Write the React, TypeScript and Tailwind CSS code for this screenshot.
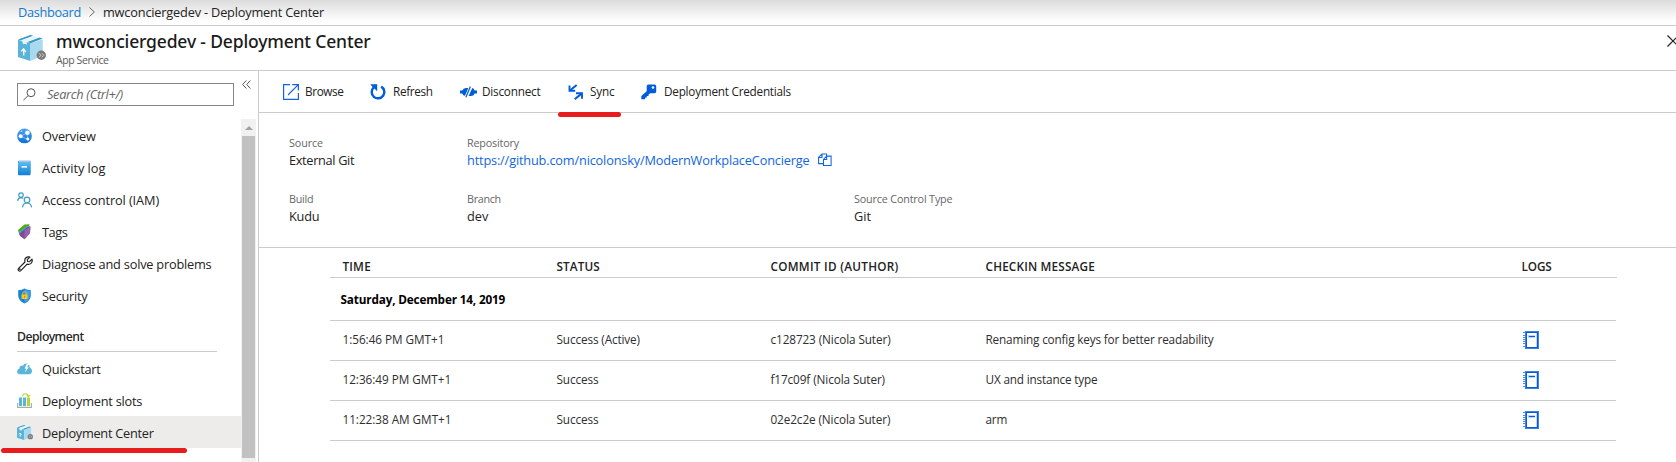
import type { ReactNode } from "react";

/* ---------- icons ---------- */

function PackageIcon({ className }: { className: string }) {
  return (
    <svg viewBox="0 0 28 26" className={className}>
      <path d="M0 4.800 12.500 8.200V26L0 22Z" fill="#59b4d9" />
      <path d="M12.500 8.200 24.700 4.200V20.500L12.500 26Z" fill="#a9d9ee" />
      <path d="M0 4.400 12.300 0 15.200.7 3 5.200Z" fill="#3999c6" />
      <path d="M9.300 7 21.500 2.500 24.700 3.500 12.500 8.200Z" fill="#3999c6" />
      <path d="M3.400 5.600 15.700 1.100 20.800 2.300 8.800 6.900V10L7.300 8.800 5.200 9.300 4.400 7Z" fill="#e6f4fa" />
      <path d="M5.700 20.500v-5.700M3.300 16.200 5.600 13.900 7.900 17.200" stroke="#fff" strokeWidth="1.400" fill="none" />
      <circle cx="23.300" cy="20.300" r="4.700" fill="#7a7a7a" />
      <path d="M20.900 18.200 23 20.300l-2.100 2.100M23.800 18.200l2.100 2.100-2.100 2.100" stroke="#ddd" strokeWidth=".9" fill="none" />
    </svg>
  );
}

function GlobeIcon() {
  return (
    <svg viewBox="0 0 16 16" className="size-4">
      <defs>
        <linearGradient id="globe" x1="0" y1="0" x2="0" y2="1">
          <stop offset="0" stopColor="#4ba3f2" />
          <stop offset="1" stopColor="#1170d0" />
        </linearGradient>
      </defs>
      <circle cx="7.500" cy="7.900" r="7.400" fill="url(#globe)" />
      <path d="M3.500 8.500 10 4.600 13 3M10 4.600l.6 6.200M3.500 8.500l7 2.600" stroke="#8cc7f7" strokeWidth=".8" fill="none" />
      <circle cx="3.600" cy="8.200" r="2" fill="#fff" />
      <circle cx="10.400" cy="4.700" r="2.300" fill="#fff" />
      <circle cx="10.800" cy="11" r="1.500" fill="#fff" />
      <circle cx="4.500" cy="3.300" r=".8" fill="#c9e5fb" />
    </svg>
  );
}

function BookIcon() {
  return (
    <svg viewBox="0 0 16 16" className="size-4">
      <defs>
        <linearGradient id="book" x1="0" y1="0" x2="0" y2="1">
          <stop offset="0" stopColor="#5bbcf0" />
          <stop offset="1" stopColor="#0f7fd6" />
        </linearGradient>
      </defs>
      <path d="M1 2Q1 .7 2.300.7H13.500V13H1Z" fill="#2d86c9" />
      <rect x="1" y="2.200" width="12.500" height="13" rx=".8" fill="url(#book)" />
      <path d="M2 1.700h11" stroke="#d4ecfa" strokeWidth=".8" />
      <rect x="4.500" y="6" width="5.500" height="1.600" fill="#fff" />
    </svg>
  );
}

function PeopleIcon() {
  return (
    <svg viewBox="0 0 16 16" className="size-4" fill="none" stroke="#3e9cc7" strokeWidth="1.200">
      <circle cx="4" cy="3.100" r="2.300" />
      <path d="M.6 8.800Q1 5.700 4 5.600q1.400 0 2.300.8" />
      <circle cx="10" cy="8" r="2.800" />
      <path d="M5.500 15.400Q6 11 10 11t4.600 4.400" />
    </svg>
  );
}

function TagIcon() {
  return (
    <svg viewBox="0 0 16 16" className="size-4">
      <path d="M1 6 7.500.500 12.500.300 11.500 3.500 2 9.600Z" fill="#59a800" />
      <path d="M1.800 8 9.300 2.200 12.800 1.800V4.200L2.400 11Z" fill="#32a9cf" />
      <path d="M2.300 9.800 10.200 3.300 13.400 2.600 13 9 7.500 15.200 3 12Z" fill="#804998" />
      <path d="M7.500 15.200V6.500L13.400 2.600 13 9Z" fill="#9563ab" />
    </svg>
  );
}

function WrenchIcon() {
  return (
    <svg viewBox="0 0 16 16" className="size-4" fill="none" stroke="#1b1b1b" strokeWidth="1.150" strokeLinejoin="round">
      <path d="M12.900 1.100 10.300 3.600l.3 1.900 1.900.2 2.500-2.500q.8 3-1.200 4.400-1.500 1.100-3.700.5l-6.300 6.500q-1.100.9-2.200 0-1-1.100 0-2.300L8 6Q7.300 3.600 8.700 2q1.800-1.700 4.200-.9Z" />
      <circle cx="2.800" cy="13.200" r=".3" />
    </svg>
  );
}

function ShieldIcon() {
  return (
    <svg viewBox="0 0 16 16" className="size-4">
      <path d="M7.500.500Q10 2.200 13.800 2.200V7.500Q13.600 12.500 7.500 15.500 1.400 12.500 1.200 7.500V2.200Q5 2.200 7.500.500Z" fill="#1583dd" />
      <path d="M7.500 1.600Q10 3 12.800 3.100V7.500Q12.600 11.800 7.500 14.400Z" fill="#3fa4ee" />
      <path d="M5.700 7V5.500q0-1.800 1.800-1.800t1.800 1.800V7" stroke="#f5b800" strokeWidth="1.100" fill="none" />
      <rect x="4.500" y="6.500" width="6" height="4.500" rx=".5" fill="#ffc61a" />
      <rect x="7" y="7.800" width="1" height="2" fill="#c98a00" />
    </svg>
  );
}

function CloudIcon() {
  return (
    <svg viewBox="0 0 16 16" className="size-4">
      <path d="M3 13.200Q.2 13 .1 10.400 0 8.200 2.300 7.700 2.200 5.300 4.300 4.700 5.100 4.500 5.800 4.800 7 2.600 9.300 2.600q3.200.2 3.400 4Q15 7.300 15 9.900q-.1 3-2.700 3.300Z" fill="#59b4d9" />
      <path d="M9.800 2.500 7.500 7.600h1.700L7.900 11.500l3.900-5.200H10L12 3.200Z" fill="#fff" />
    </svg>
  );
}

function SlotsIcon() {
  return (
    <svg viewBox="0 0 16 16" className="size-4">
      <path d="M.6 10v4.400h13.800V10" stroke="#a9abac" strokeWidth="1.100" fill="none" />
      <rect x="2" y="4.500" width="3" height="8.500" fill="#59b4d9" />
      <rect x="6" y="4.500" width="3" height="8.500" fill="#59b4d9" />
      <rect x="10" y="4.500" width="3" height="8.500" fill="#b8d432" />
      <path d="M5.500 3.300Q5.800.700 8.300.700q2.700 0 3 2.800M9.600 2.200l1.700 1.600 1.700-1.600" stroke="#b8d432" strokeWidth="1.100" fill="none" />
    </svg>
  );
}

function BrowseIcon() {
  return (
    <svg viewBox="0 0 16 16" className="size-4" fill="none" stroke="#1266dd">
      <path d="M7 .6H.6v14.800h14.800V9" strokeWidth="1.200" />
      <path d="M5 11 14.800 1.200M9.300.600h6.100v5.800" strokeWidth="1.200" />
    </svg>
  );
}

function RefreshIcon() {
  return (
    <svg viewBox="0 0 16 16" className="size-4">
      <path d="M11.200 2.600a6.300 6.300 0 1 1-7.600.9" fill="none" stroke="#015cda" strokeWidth="2.400" />
      <path d="M.3.300H7.200V7.200L4.900 4.900 2.700 3.200Z" fill="#015cda" />
    </svg>
  );
}

function DisconnectIcon() {
  return (
    <svg viewBox="0 0 17 12" className="h-3 w-[17px]">
      <path d="M0 4.600H2.300Q3.300 2 5.800 2H8.400L5 9.800Q3 9.500 2.300 7.400H0Z" fill="#015cda" />
      <path d="M17 4.600H14.700Q13.900 2.300 12.300 2L8.600 10h2.100q3 0 4-2.600H17Z" fill="#015cda" />
      <path d="M10.500.400 5.900 11.600" stroke="#fff" strokeWidth="2.400" />
      <path d="M10.400.500 5.900 11.300" stroke="#015cda" strokeWidth="1.200" />
    </svg>
  );
}

function SyncIcon() {
  return (
    <svg viewBox="0 0 16 16" className="size-4" fill="none" stroke="#015cda">
      <path d="M8.700.900 2.500 6" strokeWidth="2" />
      <path d="M1.500 1.500V6.700h5.700" strokeWidth="1.900" />
      <path d="M6.700 15.200l6.500-5.300" strokeWidth="2" />
      <path d="M8 9.200h6v5.500" strokeWidth="1.900" />
    </svg>
  );
}

function KeyIcon() {
  return (
    <svg viewBox="0 0 16 16" className="size-4">
      <path d="M7.500.500h6q1.700 0 1.700 1.700v5.300q0 1.700-1.700 1.700H9.200L7.500 10.800v1.300H5.900l-.2 1.500-1.600.2-.2 1.500H.3v-3.200L5.700 7.300V2.300Q5.800.500 7.500.500Z" fill="#015cda" />
      <circle cx="12" cy="3.500" r="1.300" fill="#fff" />
    </svg>
  );
}

function CopyIcon() {
  return (
    <svg viewBox="0 0 14 14" className="h-3.5 w-3.5" fill="none" stroke="#1266dd" strokeWidth="1.050">
      <path d="M5.500 10.600H.6V4.200L4 .9H8.600V3M.6 4.500H4V.9" />
      <path d="M5.500 6.300 8.700 3.100h4.400v9.400H5.500ZM5.500 6.500H8.700V3.100" />
    </svg>
  );
}

function LogIcon() {
  return (
    <svg viewBox="0 0 16 18" className="h-[18px] w-4">
      <rect x="2.500" y=".5" width="13" height="17" fill="#fff" stroke="#3f82e4" strokeWidth="1" />
      <path d="M13.500 2v14" stroke="#c0d7f7" strokeWidth="1" />
      <rect x="3.500" y="1.500" width="11" height="15" fill="none" stroke="#015cda" strokeWidth="1" />
      <path d="M0 1.500h2M0 4.500h2M0 6.500h2M0 8.500h3M0 10.500h2M0 12.500h2M0 15.500h2" stroke="#4a88e6" strokeWidth="1" />
      <path d="M5 5.500h7" stroke="#c0d7f7" strokeWidth="3" />
      <path d="M6 5.500h6" stroke="#015cda" strokeWidth="1" />
    </svg>
  );
}

/* ---------- sidebar ---------- */

function MenuItem({ icon, label, className }: { icon: ReactNode; label: string; className: string }) {
  return (
    <li className={`flex h-8 items-center pl-[17px] text-[12.75px] ${className}`}>
      <span className="flex w-[25px] shrink-0 pb-px">{icon}</span>
      <span className="pt-[2px]">{label}</span>
    </li>
  );
}

function Sidebar() {
  return (
    <aside className="relative flex w-[259px] shrink-0 flex-col border-r border-[#ccc]">
      <div className="flex h-12 shrink-0 items-start">
        <div className="mt-3 ml-[17px] flex h-[23px] w-[217px] items-center border border-[#858585] pl-[5px]">
          <svg viewBox="0 0 13 13" className="h-[13px] w-[13px]" fill="none" stroke="#555" strokeWidth="1">
            <circle cx="8" cy="4.700" r="4" />
            <path d="M5 7.700.400 12.300" />
          </svg>
          <span className="ml-[11px] text-[12.75px] tracking-[-0.3px] text-[#666] italic">Search (Ctrl+/)</span>
        </div>
        <svg viewBox="0 0 9 9" className="mt-[9px] ml-2 h-[9px] w-[9px]" fill="none" stroke="#555" strokeWidth="1">
          <path d="M4.300.500.700 4.500l3.600 4M8.300.500 4.700 4.500l3.600 4" />
        </svg>
      </div>
      <div className="flex min-h-0 flex-1">
        <nav className="w-[241px] pt-px">
          <ul>
            <MenuItem icon={<GlobeIcon />} label="Overview" className="tracking-[-0.2px]" />
            <MenuItem icon={<BookIcon />} label="Activity log" className="tracking-[-0.02px]" />
            <MenuItem icon={<PeopleIcon />} label="Access control (IAM)" className="tracking-[-0.1px]" />
            <MenuItem icon={<TagIcon />} label="Tags" className="tracking-[-0.4px]" />
            <MenuItem icon={<WrenchIcon />} label="Diagnose and solve problems" className="tracking-[-0.21px]" />
            <MenuItem icon={<ShieldIcon />} label="Security" className="tracking-[-0.25px]" />
          </ul>
          <h2 className="ml-[17px] flex h-10 w-[200px] items-end border-b border-[#ccc] pb-[5px] font-['Noto_Sans'] text-[12.25px] leading-[18px] font-medium tracking-[-0.5px]">
            Deployment
          </h2>
          <ul>
            <MenuItem icon={<CloudIcon />} label="Quickstart" className="pt-[2px] tracking-[-0.28px]" />
            <MenuItem icon={<SlotsIcon />} label="Deployment slots" className="pt-[2px] tracking-[-0.22px]" />
            <MenuItem icon={<PackageIcon className="h-[15px] w-4" />} label="Deployment Center" className="bg-[#edecea] pt-[2px] tracking-[-0.26px]" />
          </ul>
        </nav>
        <div className="flex w-[15px] flex-col items-center bg-[#f1f1f1]">
          <div className="flex h-[17px] items-center">
            <div className="size-0 border-x-4 border-b-4 border-x-transparent border-b-[#a3a3a3]" />
          </div>
          <div className="h-[322px] w-[13px] bg-[#c1c1c1]" />
        </div>
      </div>
      <div className="absolute top-[377px] left-px h-[5px] w-[186px] rounded-full bg-[#e81c1c]" />
    </aside>
  );
}

/* ---------- main ---------- */

function Command({ icon, label, className }: { icon: ReactNode; label: string; className: string }) {
  return (
    <button className={`flex shrink-0 items-center text-[11.75px] whitespace-nowrap ${className}`}>
      {icon}
      <span>{label}</span>
    </button>
  );
}

function Toolbar() {
  return (
    <div className="relative flex h-[42px] items-center border-b border-[#ccc] pl-6">
      <Command icon={<BrowseIcon />} label="Browse" className="w-[87px] gap-[6px] tracking-[-0.38px]" />
      <Command icon={<RefreshIcon />} label="Refresh" className="w-[90px] gap-[7px] tracking-[-0.36px]" />
      <Command icon={<DisconnectIcon />} label="Disconnect" className="w-[108px] gap-[5px] tracking-[-0.22px]" />
      <Command icon={<SyncIcon />} label="Sync" className="w-[73px] gap-[6px] tracking-[-0.2px]" />
      <Command icon={<KeyIcon />} label="Deployment Credentials" className="gap-[7px] tracking-[-0.24px]" />
      <div className="absolute top-[41px] left-[299px] h-[5px] w-[63px] rounded-full bg-[#e81c1c]" />
    </div>
  );
}

function Field({ label, labelTracking, className, children }: { label: string; labelTracking: string; className: string; children: ReactNode }) {
  return (
    <div className={className}>
      <div className={`text-[10.75px] leading-4 text-[#666] ${labelTracking}`}>{label}</div>
      <div className="flex h-[18px] items-center text-[12.75px] leading-[18px] whitespace-nowrap">{children}</div>
    </div>
  );
}

function Summary() {
  return (
    <section className="h-[135px] border-b border-[#ccc] pt-[22px] pl-[30px]">
      <div className="flex h-14">
        <Field label="Source" labelTracking="tracking-[-0.09px]" className="w-[178px]">
          <span className="tracking-[-0.33px]">External Git</span>
        </Field>
        <Field label="Repository" labelTracking="tracking-[-0.16px]" className="w-[387px]">
          <a className="tracking-[-0.17px] text-[#1266dd]">https://github.com/nicolonsky/ModernWorkplaceConcierge</a>
          <span className="ml-2">
            <CopyIcon />
          </span>
        </Field>
      </div>
      <div className="flex h-14">
        <Field label="Build" labelTracking="tracking-[-0.21px]" className="w-[178px]">
          <span className="tracking-[-0.19px]">Kudu</span>
        </Field>
        <Field label="Branch" labelTracking="tracking-[-0.3px]" className="w-[387px]">
          <span>dev</span>
        </Field>
        <Field label="Source Control Type" labelTracking="tracking-[-0.15px]" className="w-[200px]">
          <span>Git</span>
        </Field>
      </div>
    </section>
  );
}

const rows = [
  { time: "1:56:46 PM GMT+1", status: "Success (Active)", commit: "c128723 (Nicola Suter)", message: "Renaming config keys for better readability" },
  { time: "12:36:49 PM GMT+1", status: "Success", commit: "f17c09f (Nicola Suter)", message: "UX and instance type" },
  { time: "11:22:38 AM GMT+1", status: "Success", commit: "02e2c2e (Nicola Suter)", message: "arm" },
];

const columns = "grid grid-cols-[214px_214px_215px_536px_1fr] items-center border-b border-[#ccc] pl-[12.5px]";

function Deployments() {
  return (
    <section className="mr-[60px] ml-[71px] text-[11.75px]">
      <div className={`${columns} -mr-px h-[30px] pt-[9px] font-semibold`}>
        <span className="tracking-[0.2px]">TIME</span>
        <span className="tracking-[0.12px]">STATUS</span>
        <span className="tracking-[0.28px]">COMMIT ID (AUTHOR)</span>
        <span className="tracking-[0.18px]">CHECKIN MESSAGE</span>
        <span className="tracking-[-0.1px]">LOGS</span>
      </div>
      <div className="flex h-[43px] items-center border-b border-[#ccc] pt-[2px] pl-[10.5px] font-bold tracking-[-0.16px] text-black">
        Saturday, December 14, 2019
      </div>
      {rows.map((r) => (
        <div key={r.time} className={`${columns} h-10 pb-px text-[#2e2e2e]`}>
          <span className="tracking-[-0.04px]">{r.time}</span>
          <span className="tracking-[-0.12px]">{r.status}</span>
          <span className="tracking-[-0.1px]">{r.commit}</span>
          <span className="tracking-[-0.16px]">{r.message}</span>
          <span className="pl-[1.5px]">
            <LogIcon />
          </span>
        </div>
      ))}
    </section>
  );
}

export default function App() {
  return (
    <div className="flex h-[462px] w-full flex-col overflow-hidden bg-white font-['Open_Sans','Noto_Sans',sans-serif] text-[#222]">
      <nav className="flex h-[26px] shrink-0 items-center border-b border-[#ccc] bg-linear-to-b from-[#dcdcdc] to-white to-85% pb-[2px] pl-[18px] text-[12.75px] leading-[22px]">
        <a className="w-[71px] tracking-[-0.31px] text-[#0f7ad0]">Dashboard</a>
        <svg viewBox="0 0 6 10" className="mr-[8px] h-2.5 w-1.5" fill="none" stroke="#666" strokeWidth="1">
          <path d="M.500.500 5.300 5 .500 9.500" />
        </svg>
        <span className="tracking-[-0.18px]">mwconciergedev - Deployment Center</span>
      </nav>
      <header className="flex h-[45px] shrink-0 border-b border-[#ccc] pl-[18px]">
        <PackageIcon className="mt-[9px] h-[26px] w-7" />
        <div className="ml-[10px] flex-1 pt-[3px]">
          <h1 className="font-['Noto_Sans'] text-[17.5px] leading-6 font-medium tracking-[-0.16px] text-[#1b1b1b]">mwconciergedev - Deployment Center</h1>
          <p className="pt-px text-[10.5px] leading-[13px] tracking-[-0.4px] text-[#5a5a5a]">App Service</p>
        </div>
        <svg viewBox="0 0 12 12" className="mt-[9px] -mr-[3px] size-3" fill="none" stroke="#222" strokeWidth="1.200">
          <path d="M.500.500l11 11M11.500.500l-11 11" />
        </svg>
      </header>
      <div className="flex min-h-0 flex-1">
        <Sidebar />
        <main className="min-w-0 flex-1">
          <Toolbar />
          <Summary />
          <Deployments />
        </main>
      </div>
    </div>
  );
}
